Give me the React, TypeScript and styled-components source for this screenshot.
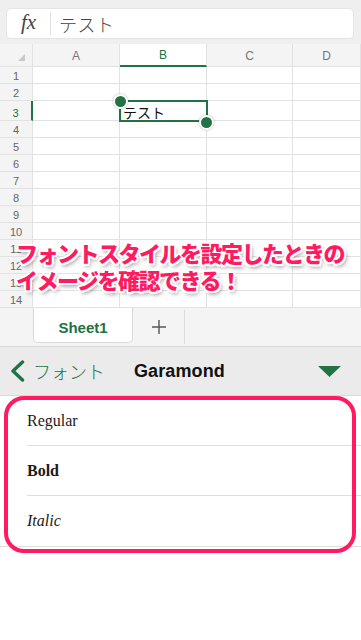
import React from "react";
import styled, { createGlobalStyle } from "styled-components";

const GREEN = "#217346";
const PINK = "#ff1a62";
const GRID_LINE = "#e2e2e2";

const GlobalStyle = createGlobalStyle`
  html, body { margin: 0; padding: 0; background: #ffffff; }
  body { font-family: "Liberation Sans", "Noto Sans CJK JP", sans-serif; }
  * { box-sizing: border-box; }
`;

const Screen = styled.div`
  position: relative;
  width: 361px;
  height: 640px;
  background: #ffffff;
  overflow: hidden;
`;

const TopBar = styled.div`
  height: 44px;
  background: #efefef;
  padding: 8px 7px 5px 6px;
`;

const FormulaBox = styled.div`
  height: 31px;
  background: #ffffff;
  border: 1px solid #e4e4e4;
  border-radius: 5px;
  display: flex;
  align-items: center;
`;

const FxLabel = styled.span`
  width: 43px;
  text-align: center;
  font-family: "Liberation Serif", serif;
  font-style: italic;
  font-size: 21px;
  color: #444;
  line-height: 1;
  padding-bottom: 3px;
`;

const FormulaDivider = styled.span`
  width: 1px;
  align-self: stretch;
  margin: 3px 0;
  background: #e2e2e2;
`;

const FormulaText = styled.span`
  margin-left: 8px;
  font-family: "Noto Sans CJK JP", sans-serif;
  font-weight: 300;
  font-size: 18px;
  color: #444;
  letter-spacing: 0.5px;
`;

const SheetGrid = styled.div`
  display: grid;
  grid-template-columns: 33px 87px 87px 86px 1fr;
  grid-template-rows: 23px 17px 17px 20px repeat(11, 17px);
`;

const Corner = styled.div`
  background: #f4f4f4;
  border-right: 1px solid ${GRID_LINE};
  border-bottom: 1px solid ${GRID_LINE};
  display: flex;
  align-items: flex-end;
  justify-content: flex-end;
  padding: 0 7px 5px 0;
`;

const CornerTriangle = styled.span`
  width: 0;
  height: 0;
  border-left: 7px solid transparent;
  border-bottom: 7px solid #c9c9c9;
`;

const ColHead = styled.div<{ $active?: boolean }>`
  background: ${(p) => (p.$active ? "#ffffff" : "#f4f4f4")};
  border-right: 1px solid ${GRID_LINE};
  border-bottom: ${(p) => (p.$active ? `2px solid ${GREEN}` : `1px solid ${GRID_LINE}`)};
  display: flex;
  align-items: center;
  justify-content: center;
  font-size: 12px;
  color: ${(p) => (p.$active ? GREEN : "#777")};
  padding-top: 1px;
`;

const RowHead = styled.div<{ $active?: boolean }>`
  background: #f4f4f4;
  border-right: ${(p) => (p.$active ? `2px solid ${GREEN}` : `1px solid ${GRID_LINE}`)};
  border-bottom: 1px solid ${GRID_LINE};
  display: flex;
  align-items: flex-end;
  justify-content: center;
  padding-bottom: 1px;
  font-size: 11px;
  color: ${(p) => (p.$active ? GREEN : "#666")};
`;

const Cell = styled.div`
  position: relative;
  background: #ffffff;
  border-right: 1px solid ${GRID_LINE};
  border-bottom: 1px solid ${GRID_LINE};
  display: flex;
  align-items: center;
  padding-left: 3px;
  font-family: "Noto Sans CJK JP", sans-serif;
  font-size: 14px;
  color: #111;
`;

const CellText = styled.span`
  position: relative;
  z-index: 1;
  padding-top: 2px;
`;

const Selection = styled.div`
  position: absolute;
  top: -1px;
  left: -1px;
  right: -2px;
  bottom: -2px;
  border: 2px solid ${GREEN};
  z-index: 2;
`;

const Handle = styled.span<{ $corner: "tl" | "br" }>`
  position: absolute;
  width: 15px;
  height: 15px;
  border-radius: 50%;
  background: ${GREEN};
  border: 2px solid #ffffff;
  box-shadow: 0 0 2px rgba(0, 0, 0, 0.35);
  ${(p) => (p.$corner === "tl" ? "top: -8px; left: -8px;" : "bottom: -10px; right: -8px;")}
`;

const Annotation = styled.div`
  position: absolute;
  top: 239px;
  left: 16px;
  font-family: "Noto Sans CJK JP", sans-serif;
  font-weight: 900;
  font-size: 22px;
  line-height: 27px;
  letter-spacing: -1.5px;
  color: ${PINK};
  white-space: nowrap;
  text-shadow:
    -2px 0 0 #fff, 2px 0 0 #fff, 0 -2px 0 #fff, 0 2px 0 #fff,
    -1.5px -1.5px 0 #fff, 1.5px -1.5px 0 #fff, -1.5px 1.5px 0 #fff, 1.5px 1.5px 0 #fff,
    2px 3px 4px rgba(0, 0, 0, 0.45);
  z-index: 5;
`;

const TabBar = styled.div`
  height: 39px;
  background: #f4f4f4;
  border-bottom: 1px solid #d6d6d6;
  display: flex;
  align-items: flex-start;
`;

const SheetTab = styled.div`
  margin-left: 33px;
  width: 100px;
  height: 35px;
  background: #ffffff;
  border: 1px solid #d9d9d9;
  border-top: none;
  border-radius: 0 0 5px 5px;
  display: flex;
  align-items: center;
  justify-content: center;
  color: ${GREEN};
  font-size: 15px;
  font-weight: 600;
  padding-top: 4px;
`;

const AddButton = styled.div`
  width: 52px;
  height: 34px;
  margin-top: 2px;
  border-right: 1px solid #dcdcdc;
  display: flex;
  align-items: center;
  justify-content: center;
`;

const FontBar = styled.div`
  height: 49px;
  background: #ebebeb;
  border-bottom: 1px solid #d9d9d9;
  display: flex;
  align-items: center;
  padding: 0 20px 0 10px;
`;

const BackButton = styled.div`
  display: flex;
  align-items: center;
  gap: 8px;
  width: 124px;
  color: ${GREEN};
  font-family: "Noto Sans CJK JP", sans-serif;
  font-weight: 300;
  font-size: 18px;
`;

const FontName = styled.div`
  flex: 1;
  font-size: 18px;
  font-weight: 600;
  color: #111;
  letter-spacing: 0.1px;
`;

const StyleList = styled.div`
  border-bottom: 1px solid #dedede;
`;

const StyleRow = styled.div<{ $weight?: number; $italic?: boolean; $divider?: boolean }>`
  position: relative;
  height: 50px;
  display: flex;
  align-items: center;
  padding-left: 27px;
  font-family: "Liberation Serif", "DejaVu Serif", serif;
  font-size: 16px;
  color: #1a1a1a;
  font-weight: ${(p) => p.$weight ?? 400};
  font-style: ${(p) => (p.$italic ? "italic" : "normal")};
  &::after {
    content: "";
    display: ${(p) => (p.$divider ? "block" : "none")};
    position: absolute;
    left: 27px;
    right: 0;
    bottom: 0;
    height: 1px;
    background: #dedede;
  }
`;

const HighlightFrame = styled.div`
  position: absolute;
  top: 396px;
  left: 4px;
  width: 352px;
  height: 157px;
  border: 4px solid ${PINK};
  border-radius: 20px;
  pointer-events: none;
`;

const columns = ["A", "B", "C", "D"];
const rows = Array.from({ length: 14 }, (_, i) => i + 1);

export default function App() {
  return (
    <Screen>
      <GlobalStyle />
      <TopBar>
        <FormulaBox>
          <FxLabel>fx</FxLabel>
          <FormulaDivider />
          <FormulaText>テスト</FormulaText>
        </FormulaBox>
      </TopBar>

      <SheetGrid>
        <Corner>
          <CornerTriangle />
        </Corner>
        {columns.map((c) => (
          <ColHead key={c} $active={c === "B"}>
            {c}
          </ColHead>
        ))}
        {rows.map((r) => (
          <React.Fragment key={r}>
            <RowHead $active={r === 3}>{r}</RowHead>
            {columns.map((c) =>
              r === 3 && c === "B" ? (
                <Cell key={c}>
                  <CellText>テスト</CellText>
                  <Selection>
                    <Handle $corner="tl" />
                    <Handle $corner="br" />
                  </Selection>
                </Cell>
              ) : (
                <Cell key={c} />
              )
            )}
          </React.Fragment>
        ))}
      </SheetGrid>

      <Annotation>
        フォントスタイルを設定したときの
        <br />
        イメージを確認できる！
      </Annotation>

      <TabBar>
        <SheetTab>Sheet1</SheetTab>
        <AddButton>
          <svg width="16" height="16" viewBox="0 0 16 16">
            <path d="M8 1v14M1 8h14" stroke="#555" strokeWidth="1.4" fill="none" />
          </svg>
        </AddButton>
      </TabBar>

      <FontBar>
        <BackButton>
          <svg width="15" height="22" viewBox="0 0 15 22">
            <polyline
              points="12.5,2 3,11 12.5,20"
              fill="none"
              stroke={GREEN}
              strokeWidth="3.4"
              strokeLinecap="round"
              strokeLinejoin="round"
            />
          </svg>
          フォント
        </BackButton>
        <FontName>Garamond</FontName>
        <svg width="23" height="11" viewBox="0 0 23 11">
          <polygon points="0,0 23,0 11.5,11" fill={GREEN} />
        </svg>
      </FontBar>

      <StyleList>
        <StyleRow $divider>Regular</StyleRow>
        <StyleRow $divider $weight={700}>
          Bold
        </StyleRow>
        <StyleRow $italic>Italic</StyleRow>
      </StyleList>

      <HighlightFrame />
    </Screen>
  );
}
